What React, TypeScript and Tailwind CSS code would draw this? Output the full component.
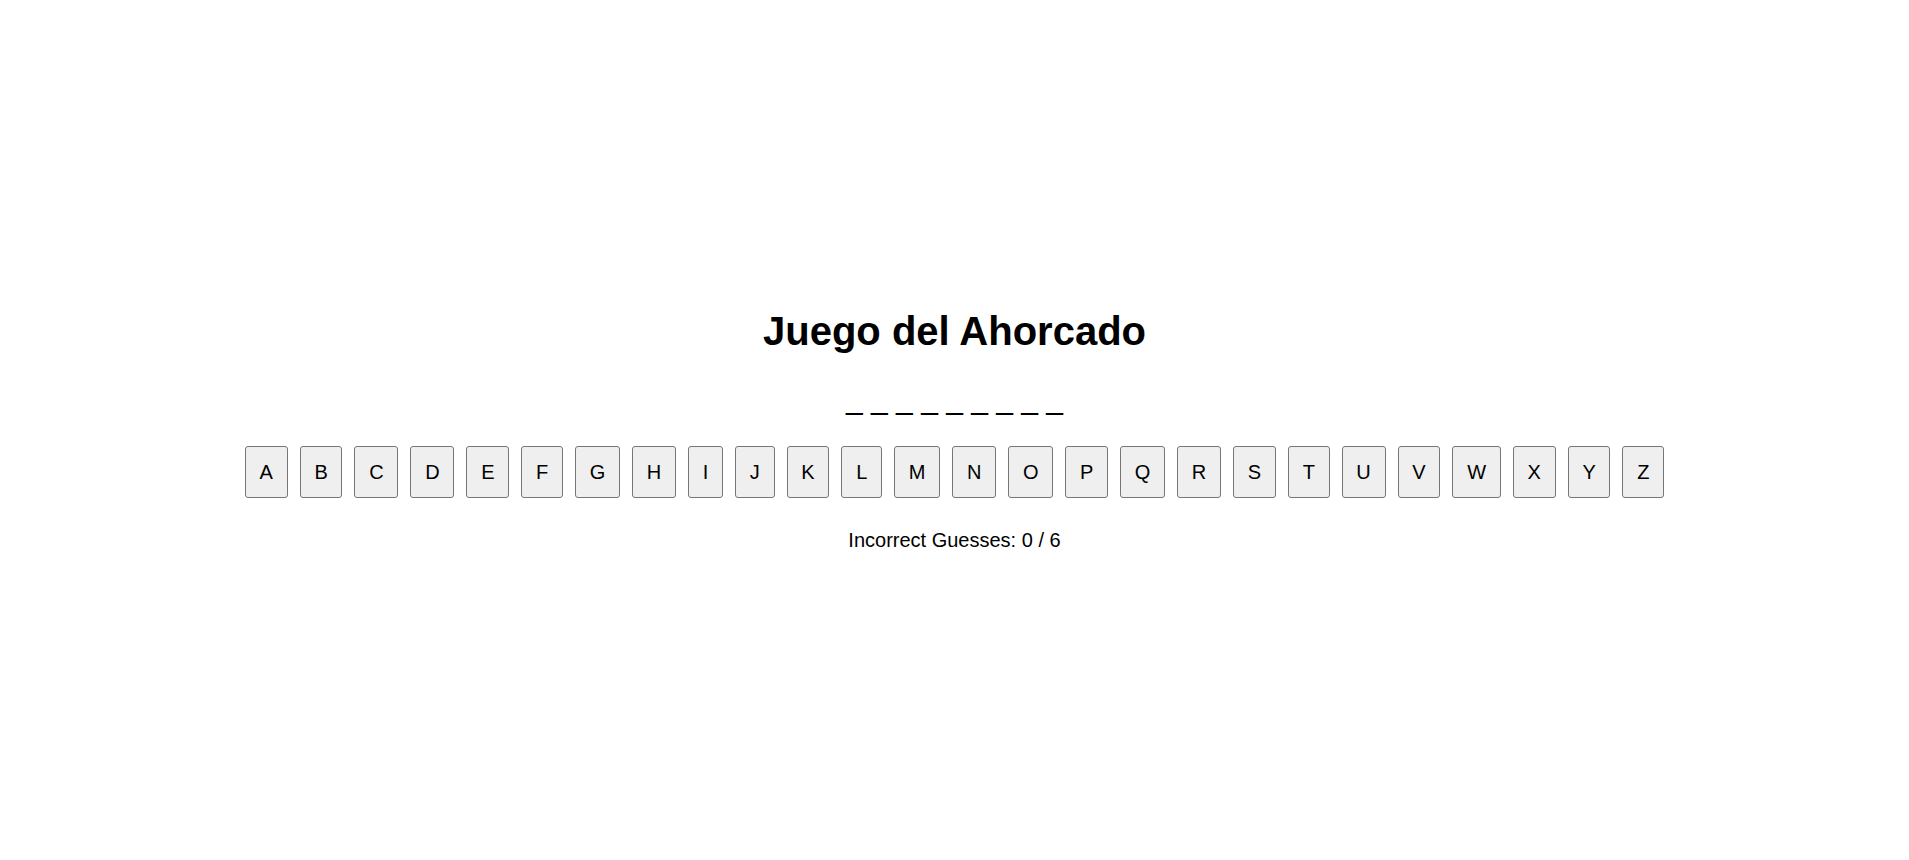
import React from "react";

const LETTERS = "ABCDEFGHIJKLMNOPQRSTUVWXYZ".split("");

export default function App() {
  return (
    <div
      className="min-h-screen w-full bg-white flex flex-col items-center justify-center text-black"
      style={{ fontFamily: '"Liberation Sans", Arial, sans-serif' }}
    >
      <h1 className="text-[40px] font-bold leading-[1.117] mb-[29px]">Juego del Ahorcado</h1>
      <p className="text-[30px] leading-[1.117] mb-[30px] whitespace-pre">_ _ _ _ _ _ _ _ _</p>
      <div className="flex flex-row gap-[12px] mb-[31px]">
        {LETTERS.map((l) => (
          <button
            key={l}
            className="h-[52px] px-[13.75px] text-[20px] leading-none bg-[#efefef] border border-[#767676] rounded-[3px] text-black"
          >
            {l}
          </button>
        ))}
      </div>
      <p className="text-[20px] leading-[1.117]">Incorrect Guesses: 0 / 6</p>
    </div>
  );
}
